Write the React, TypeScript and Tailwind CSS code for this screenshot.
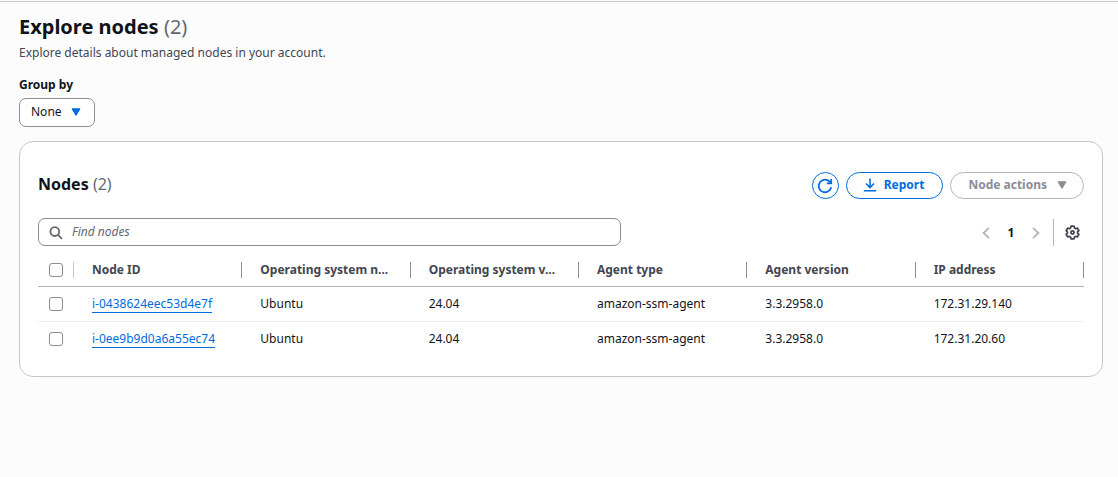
import React from "react";

type NodeRow = { id: string; os: string; osVersion: string; agent: string; agentVersion: string; ip: string };

const rows: NodeRow[] = [
  { id: "i-0438624eec53d4e7f", os: "Ubuntu", osVersion: "24.04", agent: "amazon-ssm-agent", agentVersion: "3.3.2958.0", ip: "172.31.29.140" },
  { id: "i-0ee9b9d0a6a55ec74", os: "Ubuntu", osVersion: "24.04", agent: "amazon-ssm-agent", agentVersion: "3.3.2958.0", ip: "172.31.20.60" },
];

const columns = ["Node ID", "Operating system n...", "Operating system v...", "Agent type", "Agent version", "IP address"];

function Caret({ className }: { className: string }) {
  return (
    <svg viewBox="0 0 10 8" className={className} aria-hidden="true">
      <path d="M1 .8h8L5 7.4z" fill="currentColor" stroke="currentColor" strokeWidth="1" strokeLinejoin="round" />
    </svg>
  );
}

function Tick({ label }: { label: string }) {
  return (
    <input
      type="checkbox"
      aria-label={label}
      className="block size-[14px] appearance-none rounded-[3px] border border-[#8c8c94] bg-white checked:bg-[#006ce0]"
    />
  );
}

export default function App() {
  return (
    <div className="min-h-screen bg-[#fcfcfd] pt-px font-['Noto_Sans',sans-serif] text-[12px] leading-[18px] text-[#0f141a]">
      <main className="border-t border-[#c6c6cd] pt-[11px] pr-[15px] pb-6 pl-[19px]">
        <header>
          <h1 className="text-[20px] leading-[28px] font-bold">
            Explore nodes <span className="font-normal text-[#656871]">(2)</span>
          </h1>
          <p className="mt-[3px] text-[#424650]">Explore details about managed nodes in your account.</p>
        </header>

        <div className="mt-[14px] flex flex-col items-start">
          <label htmlFor="group-by" className="font-bold">Group by</label>
          <div className="relative mt-1">
            <select
              id="group-by"
              className="block h-[29px] w-[76px] appearance-none rounded-[7px] border border-[#8c8c94] bg-white pr-6 pb-px pl-[11px]"
            >
              <option>None</option>
            </select>
            <Caret className="pointer-events-none absolute top-[10px] right-[14px] h-2 w-[10px] text-[#006ce0]" />
          </div>
        </div>

        <section className="mt-[14px] rounded-[14px] border border-[#c6c6cd] bg-white px-[18px] pt-[30px] pb-5">
          <div className="flex items-start justify-between">
            <h2 className="text-[16px] leading-[24px] font-bold">
              Nodes <span className="font-normal text-[#656871]">(2)</span>
            </h2>
            <div className="flex items-center gap-[7px] font-bold">
              <button aria-label="Refresh" className="flex size-[27px] items-center justify-center rounded-full border border-[#006ce0] text-[#006ce0]">
                <svg viewBox="0 0 16 16" className="size-4" fill="none" stroke="currentColor" strokeWidth="1.8" aria-hidden="true">
                  <path d="M14.2 9.2A6.3 6.3 0 1 1 12.6 3.6L14 5" />
                  <path d="M14.2 1v4.4H9.8" />
                </svg>
              </button>
              <button className="flex h-[27px] items-center rounded-full border border-[#006ce0] px-4 pr-[18px] pb-px text-[#006ce0]">
                <svg viewBox="0 0 14 14" className="mr-[7px] size-[14px]" fill="none" stroke="currentColor" strokeWidth="1.6" aria-hidden="true">
                  <path d="M7 .5v9M3 5.5l4 4 4-4M.8 12.8h12.4" />
                </svg>
                Report
              </button>
              <button disabled className="flex h-[27px] items-center rounded-full border border-[#b4b4bb] pr-4 pb-px pl-[17px] text-[#8c8c94]">
                Node actions
                <Caret className="ml-[10px] h-2 w-[10px]" />
              </button>
            </div>
          </div>

          <div className="mt-[19px] flex items-center justify-between">
            <div className="relative w-[56%] max-w-[583px] min-w-0">
              <input
                type="search"
                aria-label="Find nodes"
                placeholder="Find nodes"
                className="block h-[28px] w-full appearance-none rounded-[7px] border border-[#8c8c94] bg-white pr-3 pb-px pl-[33px] placeholder:text-[#656871] placeholder:italic"
              />
              <svg viewBox="0 0 14 14" className="pointer-events-none absolute top-[8px] left-[11px] size-[14px] text-[#656871]" fill="none" stroke="currentColor" strokeWidth="1.8" aria-hidden="true">
                <circle cx="5.8" cy="5.6" r="4.4" />
                <path d="m9 8.8 4 4" />
              </svg>
            </div>
            <div className="flex items-center pt-px">
              <nav aria-label="Pages" className="flex items-center">
                <button aria-label="Previous page" className="text-[#b4b4bb]">
                  <svg viewBox="0 0 8 14" className="h-[14px] w-2" fill="none" stroke="currentColor" strokeWidth="1.8" aria-hidden="true">
                    <path d="M7 1.8 1.6 7 7 12.2" />
                  </svg>
                </button>
                <button aria-current="page" className="w-[42px] font-bold">1</button>
                <button aria-label="Next page" className="text-[#b4b4bb]">
                  <svg viewBox="0 0 8 14" className="h-[14px] w-2" fill="none" stroke="currentColor" strokeWidth="1.8" aria-hidden="true">
                    <path d="M1 1.8 6.4 7 1 12.2" />
                  </svg>
                </button>
              </nav>
              <div className="ml-[13px] flex h-[27px] items-center border-l border-[#b4b4bb] pr-1 pl-[11px]">
                <button aria-label="Preferences" className="text-[#424650]">
                  <svg viewBox="0 0 16 16" className="size-[15px]" fill="none" stroke="currentColor" strokeWidth="1.9" strokeLinejoin="round" aria-hidden="true">
                    <path d="M6.4 1.3h3.2l.5 1.9 1.2.7 1.9-.5 1.6 2.7-1.4 1.3v1.3l1.4 1.3-1.6 2.7-1.9-.5-1.2.7-.5 1.9H6.4l-.5-1.9-1.2-.7-1.9.5L1.2 10l1.4-1.3V7.4L1.2 6.1l1.6-2.7 1.9.5 1.2-.7z" />
                    <circle cx="8" cy="8" r="1.7" />
                  </svg>
                </button>
              </div>
            </div>
          </div>

          <table className="mt-[6px] w-full table-fixed border-collapse text-left">
            <thead>
              <tr className="h-[34px] border-b border-[#b4b4bb] text-[#424650]">
                <th scope="col" className="w-9 p-0 pt-[2px]">
                  <div className="flex h-4 items-center border-r border-[#c6c6cd] pl-[11px]">
                    <Tick label="Select all nodes" />
                  </div>
                </th>
                {columns.map((name) => (
                  <th key={name} scope="col" className="p-0 pt-[2px] font-bold">
                    <div className="flex h-4 items-center border-r border-[#8c8c94] pl-[18px] whitespace-nowrap">
                      {name}
                    </div>
                  </th>
                ))}
              </tr>
            </thead>
            <tbody>
              {rows.map((row) => (
                <tr key={row.id} className="h-[35px] border-b border-[#ebebf0] last:border-b-0">
                  <td className="p-0 pl-[11px]">
                    <Tick label={`Select ${row.id}`} />
                  </td>
                  <td className="p-0 pl-[18px]">
                    <a href={`#${row.id}`} className="border-b border-[#006ce0] text-[#006ce0]">{row.id}</a>
                  </td>
                  <td className="p-0 pl-[18px]">{row.os}</td>
                  <td className="p-0 pl-[18px]">{row.osVersion}</td>
                  <td className="p-0 pl-[18px]">{row.agent}</td>
                  <td className="p-0 pl-[18px]">{row.agentVersion}</td>
                  <td className="p-0 pl-[18px]">{row.ip}</td>
                </tr>
              ))}
            </tbody>
          </table>
        </section>
      </main>
    </div>
  );
}
